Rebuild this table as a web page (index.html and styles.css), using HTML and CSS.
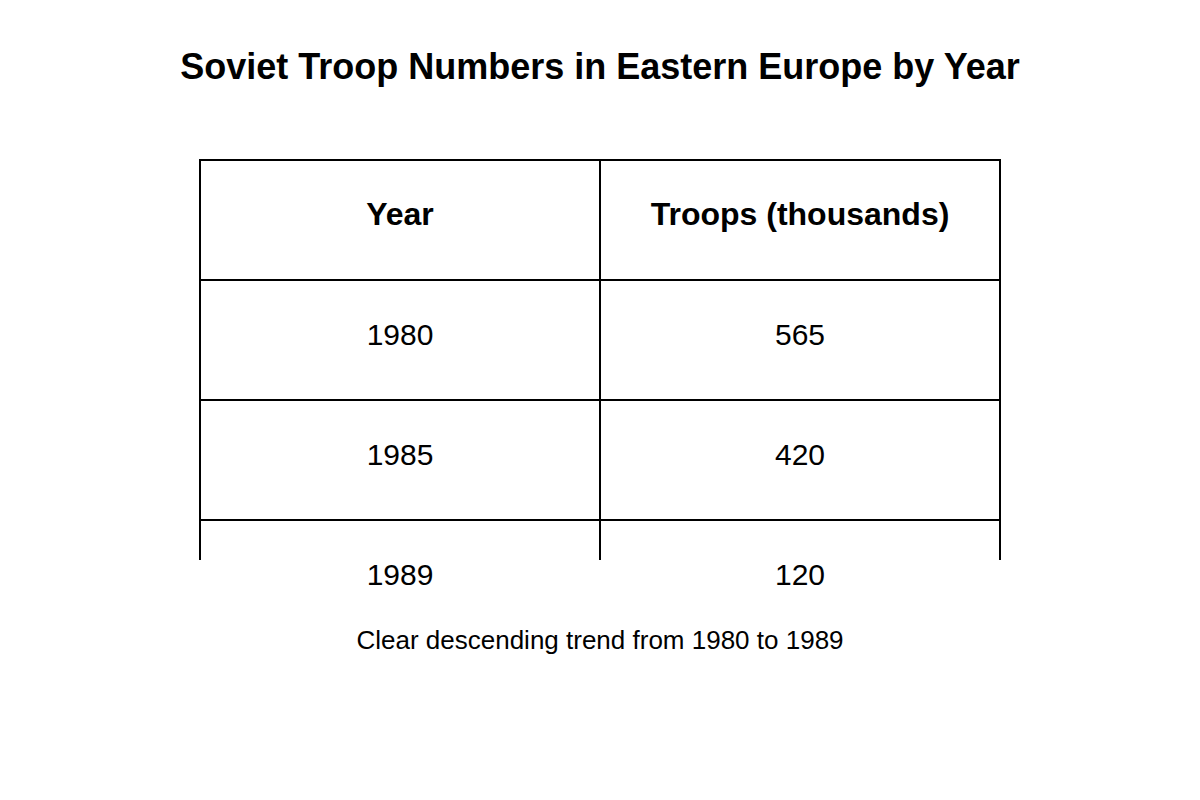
FILE: index.html
```html
<!DOCTYPE html>
<html lang="en">
<head>
<meta charset="utf-8">
<title>Soviet Troop Numbers</title>
<link rel="stylesheet" href="styles.css">
</head>
<body>
<main class="page">
  <h1 class="title">Soviet Troop Numbers in Eastern Europe by Year</h1>
  <div class="table">
    <div class="row head">
      <div class="cell">Year</div>
      <div class="cell last">Troops (thousands)</div>
    </div>
    <div class="row">
      <div class="cell">1980</div>
      <div class="cell last">565</div>
    </div>
    <div class="row">
      <div class="cell">1985</div>
      <div class="cell last">420</div>
    </div>
    <div class="row cut">
      <div class="cell">1989</div>
      <div class="cell last">120</div>
    </div>
  </div>
  <p class="note">Clear descending trend from 1980 to 1989</p>
</main>
</body>
</html>
```

FILE: styles.css
```css
html, body {
  margin: 0;
  padding: 0;
  background: #ffffff;
}

body {
  width: 1200px;
  height: 800px;
  overflow: hidden;
  font-family: "Liberation Sans", Arial, sans-serif;
  color: #000000;
}

.page {
  display: flex;
  flex-direction: column;
  align-items: center;
}

.title {
  margin: 47px 0 0;
  font-size: 36px;
  line-height: 40px;
  font-weight: 700;
  text-align: center;
}

.table {
  margin-top: 72px;
  width: 802px;
  display: flex;
  flex-direction: column;
}

.row {
  display: grid;
  grid-template-columns: 400px 402px;
  border-top: 2px solid #000;
}

.cell {
  height: 118px;
  box-sizing: border-box;
  padding-top: 39px;
  border-left: 2px solid #000;
  font-size: 30px;
  line-height: 30px;
  text-align: center;
}

.cell.last {
  border-right: 2px solid #000;
}

.head .cell {
  font-weight: 700;
  font-size: 32px;
  line-height: 32px;
  padding-top: 37px;
}

.cut .cell {
  height: 39px;
  overflow: visible;
  padding-top: 39px;
}

.note {
  margin: 67px 0 0;
  font-size: 26px;
  line-height: 26px;
  text-align: center;
}
```
